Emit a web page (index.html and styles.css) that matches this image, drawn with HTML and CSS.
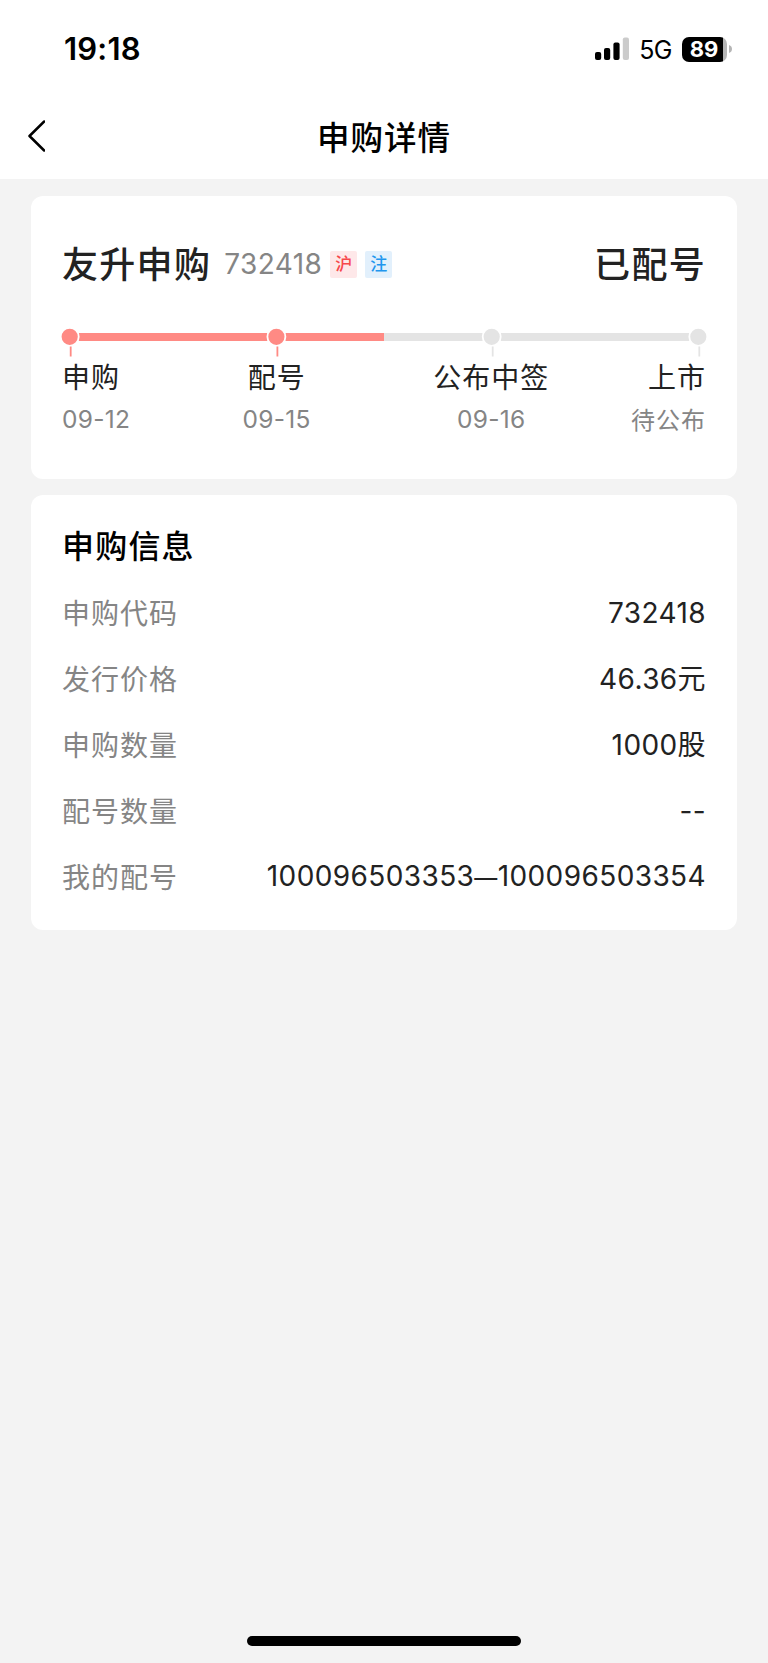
FILE: index.html
```html
<!DOCTYPE html>
<html lang="zh-CN">
<head>
<meta charset="utf-8">
<title>申购详情</title>
<link rel="stylesheet" href="styles.css">
</head>
<body>
<div class="screen">
  <div class="status-bar">
    <span class="clock">19:18</span>
    <div class="status-icons">
      <svg class="signal" width="34" height="24" viewBox="0 0 34 24">
        <rect x="0" y="15" width="6.2" height="8" rx="2"/>
        <rect x="9" y="11" width="6.2" height="12" rx="2"/>
        <rect x="18.400" y="5.600" width="6.200" height="17.400" rx="2"/>
        <rect x="27.800" y="0.500" width="6.200" height="22.500" rx="2" fill="#cbcbcb"/>
      </svg>
      <span class="network">5G</span>
      <div class="battery"><span class="battery-level">89</span></div>
      <svg class="battery-tip" width="3" height="8" viewBox="0 0 3 8"><path d="M0 0Q3 1.200 3 4T0 8Z" fill="#b5b5b5"/></svg>
    </div>
  </div>
  <header class="nav">
    <svg class="back" width="18" height="32" viewBox="0 0 18 32"><path d="M17.200 1.500 2.500 16 17.200 30.500" fill="none" stroke="#000" stroke-width="2.500" stroke-linecap="round" stroke-linejoin="round"/></svg>
    <h1 class="nav-title">申购详情</h1>
  </header>
  <main class="content">
    <section class="card summary">
      <div class="stock">
        <span class="stock-name">友升申购</span>
        <span class="stock-code">732418</span>
        <span class="tag tag-red">沪</span>
        <span class="tag tag-blue">注</span>
        <span class="stock-state">已配号</span>
      </div>
      <svg class="track" width="645" height="30" viewBox="0 0 645 30">
        <path d="M8 8H322" stroke="#ff8a84" stroke-width="8"/>
        <path d="M322 8H637" stroke="#e4e4e4" stroke-width="8"/>
        <g stroke="#fff" stroke-width="1.800">
          <circle cx="7.700" cy="7.800" r="9" fill="#ff8a84"/>
          <circle cx="214.400" cy="7.800" r="9" fill="#ff8a84"/>
          <circle cx="429.700" cy="7.800" r="9" fill="#e4e4e4"/>
          <circle cx="636.300" cy="7.800" r="9" fill="#e4e4e4"/>
        </g>
        <path d="M8.700 17.500V27.500M215.400 17.500V27.500" stroke="#ff8a84" stroke-width="1.800"/>
        <path d="M430.700 17.500V27.500M637.300 17.500V27.500" stroke="#e4e4e4" stroke-width="1.800"/>
      </svg>
      <div class="steps">
        <div class="step step-first"><span class="step-name">申购</span><span class="step-date">09-12</span></div>
        <div class="step"><span class="step-name">配号</span><span class="step-date">09-15</span></div>
        <div class="step"><span class="step-name">公布中签</span><span class="step-date">09-16</span></div>
        <div class="step step-last"><span class="step-name">上市</span><span class="step-date cjk">待公布</span></div>
      </div>
    </section>
    <section class="card info">
      <h2 class="info-title">申购信息</h2>
      <div class="row"><span class="label">申购代码</span><span class="value">732418</span></div>
      <div class="row"><span class="label">发行价格</span><span class="value">46.36元</span></div>
      <div class="row"><span class="label">申购数量</span><span class="value">1000股</span></div>
      <div class="row"><span class="label">配号数量</span><span class="value">--</span></div>
      <div class="row"><span class="label">我的配号</span><span class="value">100096503353<span class="dash">—</span>100096503354</span></div>
    </section>
  </main>
  <div class="home-indicator"></div>
</div>
</body>
</html>
```
FILE: styles.css
```css
* { box-sizing: border-box; }
body {
  margin: 0;
  background: #f3f3f3;
  color: #222;
  font-family: Inter, "Noto Sans CJK SC", sans-serif;
}
.screen {
  display: flex;
  flex-direction: column;
  height: 1663px;
}
.status-bar {
  display: flex;
  justify-content: space-between;
  height: 94px;
  padding: 29px 36px 0 64px;
  background: #fff;
  color: #000;
}
.clock {
  font-size: 31px;
  font-weight: 600;
  letter-spacing: 0.2px;
  line-height: 40px;
}
.status-icons {
  display: flex;
  align-items: center;
  height: 40px;
}
.network {
  margin: 2px 10px 0;
  font-size: 25px;
  letter-spacing: -0.5px;
  line-height: 36px;
}
.battery {
  width: 45px;
  height: 25px;
  border-radius: 7px;
  background: linear-gradient(90deg, #000 41px, #b5b5b5 41px);
  text-align: center;
}
.battery-level {
  display: block;
  padding-right: 1px;
  color: #fff;
  font-size: 22px;
  font-weight: 700;
  line-height: 25px;
}
.battery-tip { margin-left: 2px; }
.nav {
  display: grid;
  grid-template-columns: 1fr auto 1fr;
  align-items: center;
  height: 85px;
  padding: 0 27px;
  background: #fff;
}
.back { margin-top: -2px; }
.nav-title {
  margin: 4px 0 0;
  color: #000;
  font-size: 32.5px;
  font-weight: 500;
  letter-spacing: 1px;
  line-height: 48px;
}
.content {
  display: flex;
  flex-direction: column;
  gap: 16px;
  padding: 17px 31px 0;
}
.card {
  border-radius: 12px;
  background: #fff;
}
.summary {
  height: 283px;
  padding: 40px 31px 0;
}
.stock {
  display: flex;
  align-items: center;
  height: 56px;
}
.stock-name, .stock-state {
  padding-bottom: 5px;
  font-size: 36px;
  font-weight: 500;
  letter-spacing: 1.3px;
}
.stock-code {
  margin: 0 8px 0 13px;
  color: #858585;
  font-size: 28px;
  letter-spacing: 0.4px;
}
.tag {
  width: 27px;
  height: 27px;
  border-radius: 2px;
  font-size: 17px;
  font-weight: 500;
  line-height: 27px;
  text-align: center;
}
.tag-red { background: #fee8e9; color: #f7474b; }
.tag-blue { margin-left: 8px; background: #e2f0fc; color: #2196ee; }
.stock-state { margin-left: auto; }
.track {
  display: block;
  margin-top: 37px;
  overflow: visible;
}
.steps {
  display: grid;
  grid-template-columns: 1fr 2fr 2fr 1fr;
  padding-top: 1px;
}
.step {
  display: flex;
  flex-direction: column;
  align-items: center;
}
.step-first { align-items: flex-start; }
.step-last { align-items: flex-end; }
.step-name {
  font-size: 28px;
  letter-spacing: 1px;
  line-height: 36px;
}
.step-date {
  margin-top: 6px;
  color: #858585;
  font-size: 24.5px;
  letter-spacing: 0.3px;
  line-height: 35px;
  white-space: nowrap;
}
.cjk {
  font-size: 24px;
  letter-spacing: 1px;
  line-height: 37px;
}
.info {
  height: 435px;
  padding: 28px 31px 0;
}
.info-title {
  margin: 0 0 8px;
  color: #000;
  font-size: 32px;
  font-weight: 500;
  letter-spacing: 1.2px;
  line-height: 48px;
}
.row {
  display: flex;
  justify-content: space-between;
  align-items: center;
  height: 66px;
  font-size: 28px;
  line-height: 42px;
}
.label {
  padding-top: 3px;
  color: #858585;
  letter-spacing: 1px;
}
.value {
  padding-top: 2px;
  letter-spacing: 0.4px;
}
.dash { font-size: 23px; }
.home-indicator {
  align-self: center;
  width: 274px;
  height: 10px;
  margin: auto 0 17px;
  border-radius: 5px;
  background: #000;
}
```
